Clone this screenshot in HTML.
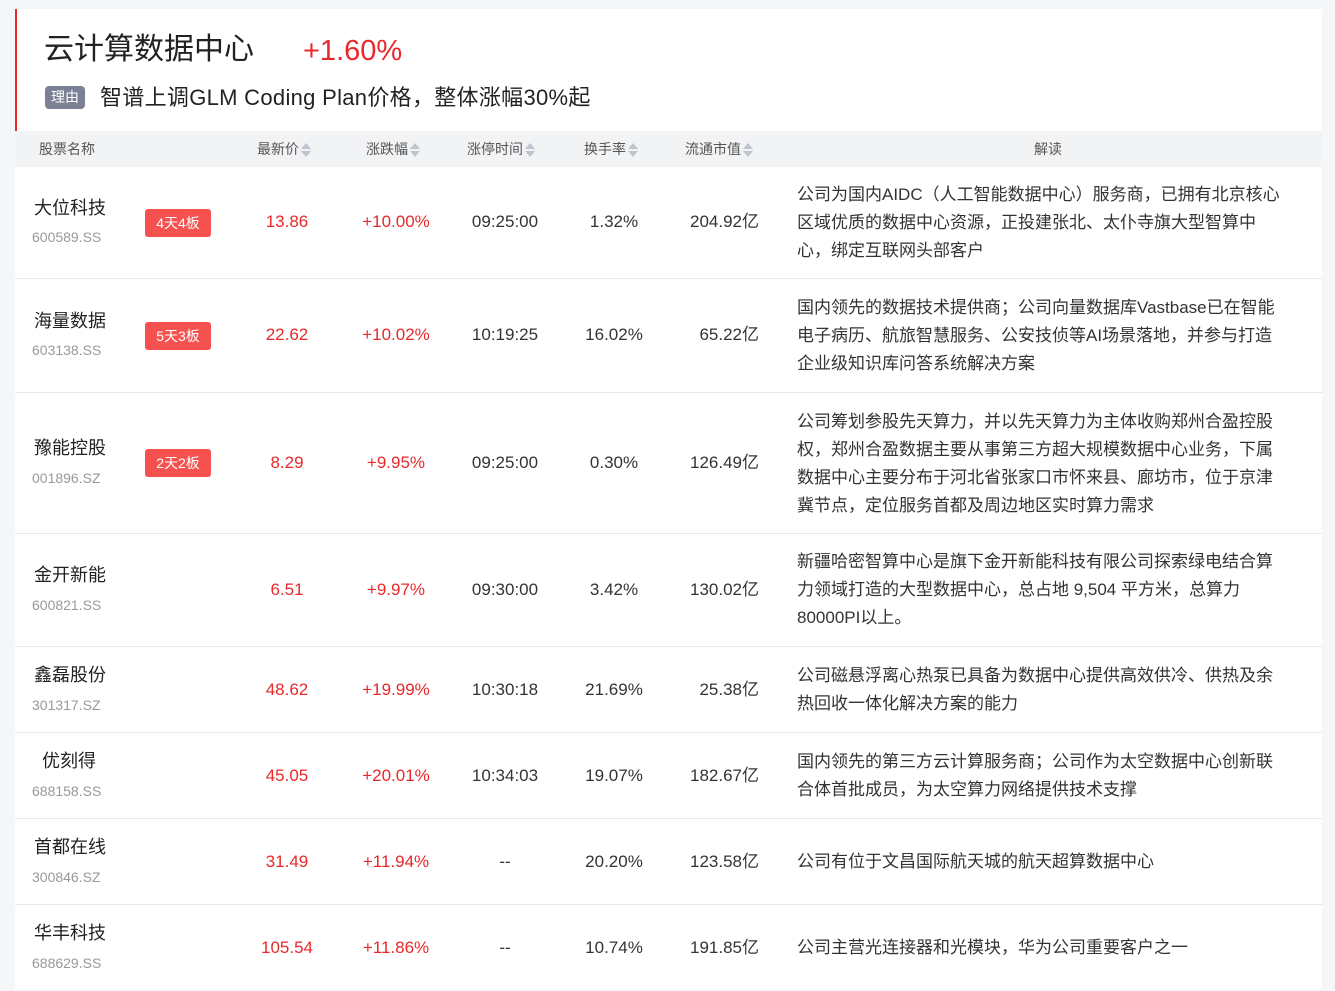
<!DOCTYPE html>
<html><head><meta charset="utf-8"><style>
*{margin:0;padding:0;box-sizing:border-box}
body{width:1335px;height:979px;background:#f5f6f8;font-family:"Liberation Sans","Noto Sans CJK SC",sans-serif;overflow:hidden;position:relative;color:#333;line-height:1.2}
.card{position:absolute;left:15px;top:9px;width:1307px;height:980px;background:#fff}
.bar{position:absolute;left:15px;top:9px;width:2px;height:122px;background:#e8282a}
.title{position:absolute;left:44px;top:32px;font-size:30px;color:#222;line-height:36px}
.pct{position:absolute;left:303px;top:33px;font-size:29px;color:#e8282a;line-height:36px}
.tag{position:absolute;left:45px;top:86px;width:40px;height:23px;background:#7b8095;color:#fff;border-radius:4px;font-size:14px;text-align:center;line-height:23px}
.reason{position:absolute;left:100px;top:84px;font-size:22px;letter-spacing:0.3px;color:#222;line-height:28px}
.hd{position:absolute;left:15px;top:131px;width:1307px;height:36px;background:#f2f3f5;font-size:14px;color:#555}
.hd span{position:absolute;top:10px}
.ar{display:inline-block;vertical-align:middle;margin-left:2px;width:10px;height:16px;position:relative}
.ar:before{content:"";position:absolute;left:0;top:1px;border:5px solid transparent;border-top:0;border-bottom:6px solid #c0c4cc}
.ar:after{content:"";position:absolute;left:0;top:9px;border:5px solid transparent;border-bottom:0;border-top:6px solid #c0c4cc}
.row{position:absolute;left:15px;width:1307px;border-bottom:1px solid #e8e8e8}
.row>div{position:absolute}
.nm{left:19px;font-size:18px;color:#222;line-height:22px}
.cd{left:17px;font-size:14px;color:#999;line-height:18px}
.b{left:130px;width:66px;height:28px;background:#f5524f;color:#fff;border-radius:3px;font-size:14px;text-align:center;line-height:28px}
.c{font-size:17px;text-align:center;width:110px;line-height:20px}
.m{text-align:right;width:91px;left:653px}
.r{color:#e8282a}
.d{left:782px;width:492px;font-size:17px;line-height:28px;color:#333}
</style></head><body>
<div class="card"></div><div class="bar"></div>
<div class="title">云计算数据中心</div><div class="pct">+1.60%</div>
<div class="tag">理由</div><div class="reason">智谱上调GLM Coding Plan价格，整体涨幅30%起</div>
<div class="hd">
<span style="left:24px">股票名称</span>
<span style="left:242px">最新价<i class="ar"></i></span>
<span style="left:351px">涨跌幅<i class="ar"></i></span>
<span style="left:452px">涨停时间<i class="ar"></i></span>
<span style="left:569px">换手率<i class="ar"></i></span>
<span style="left:670px">流通市值<i class="ar"></i></span>
<span style="left:1019px">解读</span>
</div>

<div class="row" style="top:167px;height:112px">
<div class="nm" style="top:30px">大位科技</div><div class="cd" style="top:61px">600589.SS</div>
<div class="b" style="top:42px">4天4板</div>
<div class="c r" style="left:217px;top:45px">13.86</div><div class="c r" style="left:326px;top:45px">+10.00%</div>
<div class="c" style="left:435px;top:45px">09:25:00</div><div class="c" style="left:544px;top:45px">1.32%</div>
<div class="c m" style="top:45px">204.92亿</div>
<div class="d" style="top:14px">公司为国内AIDC（人工智能数据中心）服务商，已拥有北京核心区域优质的数据中心资源，正投建张北、太仆寺旗大型智算中心，绑定互联网头部客户</div>
</div>

<div class="row" style="top:279px;height:114px">
<div class="nm" style="top:31px">海量数据</div><div class="cd" style="top:62px">603138.SS</div>
<div class="b" style="top:43px">5天3板</div>
<div class="c r" style="left:217px;top:46px">22.62</div><div class="c r" style="left:326px;top:46px">+10.02%</div>
<div class="c" style="left:435px;top:46px">10:19:25</div><div class="c" style="left:544px;top:46px">16.02%</div>
<div class="c m" style="top:46px">65.22亿</div>
<div class="d" style="top:15px">国内领先的数据技术提供商；公司向量数据库Vastbase已在智能电子病历、航旅智慧服务、公安技侦等AI场景落地，并参与打造企业级知识库问答系统解决方案</div>
</div>

<div class="row" style="top:393px;height:141px">
<div class="nm" style="top:44px">豫能控股</div><div class="cd" style="top:76px">001896.SZ</div>
<div class="b" style="top:56px">2天2板</div>
<div class="c r" style="left:217px;top:60px">8.29</div><div class="c r" style="left:326px;top:60px">+9.95%</div>
<div class="c" style="left:435px;top:60px">09:25:00</div><div class="c" style="left:544px;top:60px">0.30%</div>
<div class="c m" style="top:60px">126.49亿</div>
<div class="d" style="top:15px">公司筹划参股先天算力，并以先天算力为主体收购郑州合盈控股权，郑州合盈数据主要从事第三方超大规模数据中心业务，下属数据中心主要分布于河北省张家口市怀来县、廊坊市，位于京津冀节点，定位服务首都及周边地区实时算力需求</div>
</div>

<div class="row" style="top:534px;height:113px">
<div class="nm" style="top:30px">金开新能</div><div class="cd" style="top:62px">600821.SS</div>
<div class="c r" style="left:217px;top:46px">6.51</div><div class="c r" style="left:326px;top:46px">+9.97%</div>
<div class="c" style="left:435px;top:46px">09:30:00</div><div class="c" style="left:544px;top:46px">3.42%</div>
<div class="c m" style="top:46px">130.02亿</div>
<div class="d" style="top:14px">新疆哈密智算中心是旗下金开新能科技有限公司探索绿电结合算力领域打造的大型数据中心，总占地 9,504 平方米，总算力80000PI以上。</div>
</div>

<div class="row" style="top:647px;height:86px">
<div class="nm" style="top:17px">鑫磊股份</div><div class="cd" style="top:49px">301317.SZ</div>
<div class="c r" style="left:217px;top:33px">48.62</div><div class="c r" style="left:326px;top:33px">+19.99%</div>
<div class="c" style="left:435px;top:33px">10:30:18</div><div class="c" style="left:544px;top:33px">21.69%</div>
<div class="c m" style="top:33px">25.38亿</div>
<div class="d" style="top:15px">公司磁悬浮离心热泵已具备为数据中心提供高效供冷、供热及余热回收一体化解决方案的能力</div>
</div>

<div class="row" style="top:733px;height:86px">
<div class="nm" style="top:17px;left:27px">优刻得</div><div class="cd" style="top:49px">688158.SS</div>
<div class="c r" style="left:217px;top:33px">45.05</div><div class="c r" style="left:326px;top:33px">+20.01%</div>
<div class="c" style="left:435px;top:33px">10:34:03</div><div class="c" style="left:544px;top:33px">19.07%</div>
<div class="c m" style="top:33px">182.67亿</div>
<div class="d" style="top:15px">国内领先的第三方云计算服务商；公司作为太空数据中心创新联合体首批成员，为太空算力网络提供技术支撑</div>
</div>

<div class="row" style="top:819px;height:86px">
<div class="nm" style="top:17px">首都在线</div><div class="cd" style="top:49px">300846.SZ</div>
<div class="c r" style="left:217px;top:33px">31.49</div><div class="c r" style="left:326px;top:33px">+11.94%</div>
<div class="c" style="left:435px;top:33px">--</div><div class="c" style="left:544px;top:33px">20.20%</div>
<div class="c m" style="top:33px">123.58亿</div>
<div class="d" style="top:29px">公司有位于文昌国际航天城的航天超算数据中心</div>
</div>

<div class="row" style="top:905px;height:86px;border:0">
<div class="nm" style="top:17px">华丰科技</div><div class="cd" style="top:49px">688629.SS</div>
<div class="c r" style="left:217px;top:33px">105.54</div><div class="c r" style="left:326px;top:33px">+11.86%</div>
<div class="c" style="left:435px;top:33px">--</div><div class="c" style="left:544px;top:33px">10.74%</div>
<div class="c m" style="top:33px">191.85亿</div>
<div class="d" style="top:29px">公司主营光连接器和光模块，华为公司重要客户之一</div>
</div>
</body></html>
